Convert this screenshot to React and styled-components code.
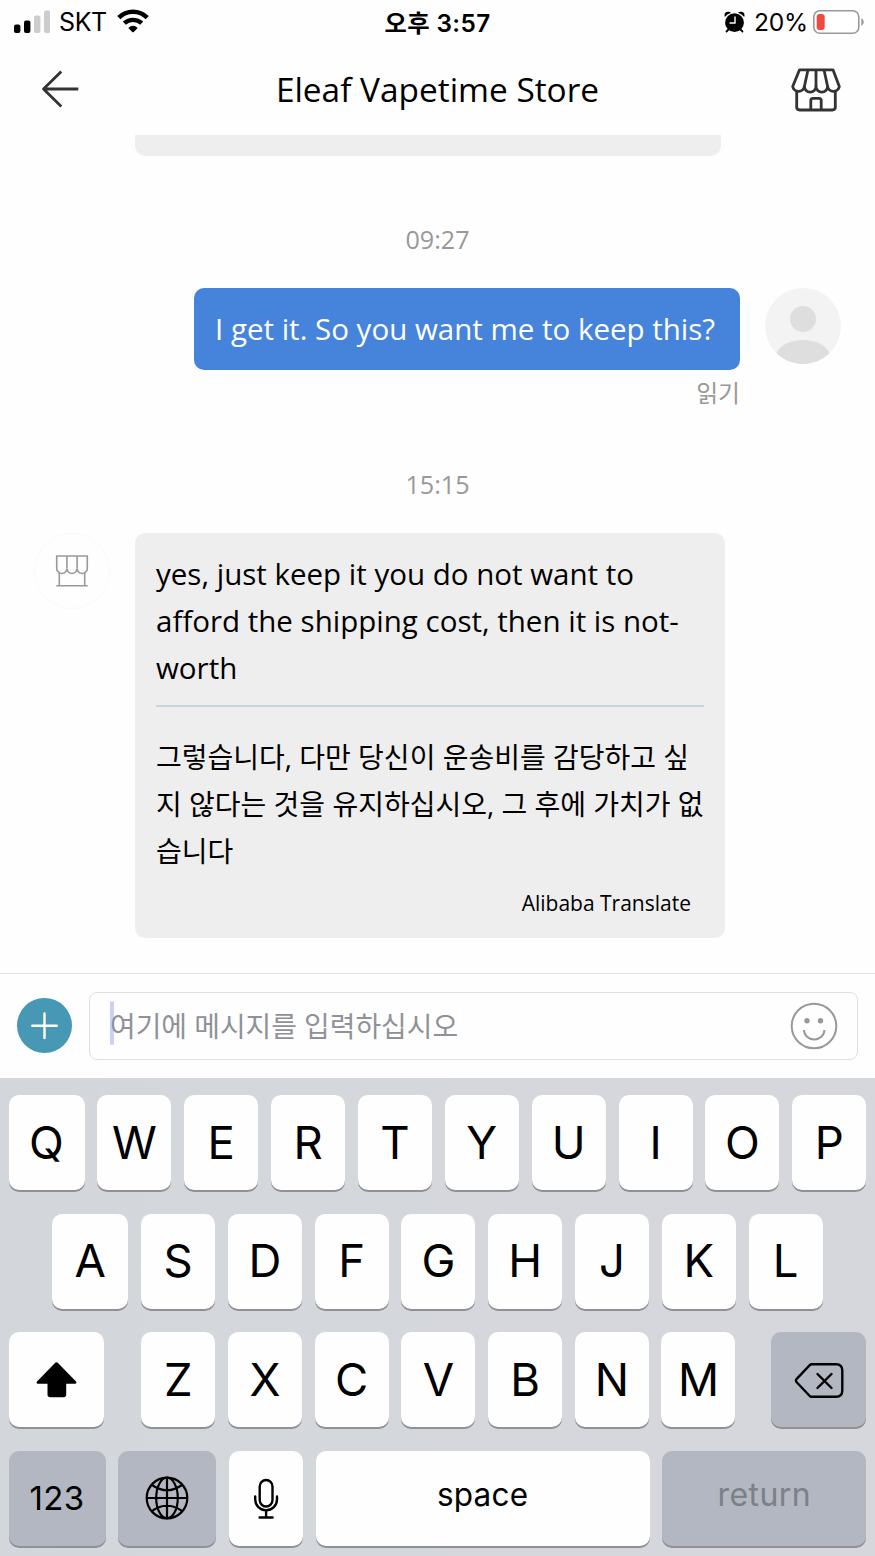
import React from "react";
import styled, { createGlobalStyle } from "styled-components";

const GlobalStyle = createGlobalStyle`
  * { box-sizing: border-box; }
  body { margin: 0; background: #fdfdfd; overflow: hidden; }
  svg { display: block; flex: none; }
`;

const ui = `"Inter", "Noto Sans CJK KR", sans-serif`;
const chat = `"Open Sans", "Noto Sans CJK KR", sans-serif`;

const Screen = styled.div`
  width: 875px;
  height: 1556px;
  display: flex;
  flex-direction: column;
  background: #fefefe;
  font-family: ${chat};
  color: #000;
  overflow: hidden;
`;

const StatusBar = styled.div`
  flex: none;
  height: 44px;
  padding: 0 11px 0 14px;
  display: grid;
  grid-template-columns: 1fr auto 1fr;
  align-items: center;
  font-family: ${ui};
  font-size: 25px;
  line-height: 44px;
`;

const StatusGroup = styled.div`
  display: flex;
  align-items: center;
  justify-content: ${(p) => (p.$end ? "flex-end" : "flex-start")};
`;

const Carrier = styled.span`
  margin: 0 10px 0 9px;
  letter-spacing: -0.4px;
`;

const Clock = styled.span`
  padding: 2px 3px 0 0;
  font-weight: 600;
  font-size: 24.3px;
  line-height: 42px;
  letter-spacing: 0.4px;
`;

const Percent = styled.span`
  margin: 0 5px 0 9px;
  font-size: 24.6px;
  letter-spacing: -0.2px;
`;

const Header = styled.header`
  flex: none;
  height: 91px;
  padding: 0 34px 0 41px;
  display: grid;
  grid-template-columns: 43px 1fr 50px;
  align-items: center;
`;

const Title = styled.h1`
  margin: -2px 0 0;
  text-align: center;
  font-weight: 400;
  font-size: 33.4px;
  line-height: 48px;
`;

const Conversation = styled.main`
  flex: none;
  height: 838px;
  display: flex;
  flex-direction: column;
`;

const PreviousBubble = styled.div`
  flex: none;
  width: 586px;
  height: 21px;
  margin-left: 135px;
  border-radius: 0 0 10px 10px;
  background: #eee;
`;

const Time = styled.div`
  flex: none;
  margin-top: ${(p) => p.$gap}px;
  height: 36px;
  line-height: 36px;
  text-align: center;
  font-size: 25.2px;
  color: #999;
`;

const MessageRow = styled.div`
  flex: none;
  display: flex;
  align-items: flex-start;
  margin-top: ${(p) => p.$gap}px;
  padding: 0 34px;
  justify-content: ${(p) => (p.$own ? "flex-end" : "flex-start")};
`;

const OwnColumn = styled.div`
  display: flex;
  flex-direction: column;
  align-items: flex-end;
  margin-right: 25px;
`;

const OwnBubble = styled.div`
  width: 546px;
  height: 82px;
  padding-left: 21px;
  border-radius: 10px;
  background: #4684dc;
  color: #fff;
  font-size: 29.5px;
  line-height: 82px;
  white-space: nowrap;
`;

const ReadMark = styled.div`
  margin-top: 5px;
  height: 36px;
  line-height: 36px;
  font-size: 23.8px;
  color: #999;
`;

const StoreAvatar = styled.div`
  width: 76px;
  height: 76px;
  margin-right: 25px;
  border: 1px solid #fafafa;
  border-radius: 50%;
  display: flex;
  align-items: center;
  justify-content: center;
`;

const StoreBubble = styled.div`
  width: 590px;
  height: 405px;
  padding: 17px 21px 0;
  border-radius: 10px;
  background: #eee;
  display: flex;
  flex-direction: column;
`;

const Line = styled.div`
  height: 47px;
  line-height: 47px;
  font-size: ${(p) => (p.$korean ? 28 : 29.5)}px;
  white-space: nowrap;
`;

const Divider = styled.div`
  flex: none;
  height: 2px;
  margin: 14px 0 27px;
  background: #c8d5dc;
`;

const Translator = styled.div`
  margin: 12px 13px 0 0;
  height: 32px;
  line-height: 32px;
  text-align: right;
  font-size: 21px;
`;

const Composer = styled.div`
  flex: none;
  height: 105px;
  padding: 0 17px 1px;
  border-top: 1px solid #e2e2e3;
  display: flex;
  align-items: center;
  gap: 17px;
`;

const AddButton = styled.button`
  width: 55px;
  height: 55px;
  padding: 0;
  border: 0;
  border-radius: 50%;
  background: #4698b4;
  display: flex;
  align-items: center;
  justify-content: center;
`;

const Field = styled.div`
  flex: 1;
  height: 68px;
  padding: 0 19px 0 21px;
  border: 1px solid #dedfe1;
  border-radius: 8px;
  display: flex;
  align-items: center;
`;

const Caret = styled.span`
  width: 4px;
  height: 44px;
  margin: -6px -4px 0 -1px;
  border-radius: 2px;
  background: #c9d0fa;
`;

const Placeholder = styled.span`
  flex: 1;
  font-size: 27.9px;
  line-height: 64px;
  color: #8e9298;
  white-space: nowrap;
`;

const Keyboard = styled.div`
  flex: 1;
  padding: 17px 8.7px 0 8.5px;
  display: flex;
  flex-direction: column;
  gap: 21.6px;
  background: linear-gradient(90deg, #d3d7dc, #d6d7dc);
`;

const KeyRow = styled.div`
  display: flex;
  justify-content: ${(p) => (p.$centered ? "center" : "space-between")};
  gap: ${(p) => (p.$centered ? 12.8 : 0)}px;
  height: 97px;
`;

const LetterGroup = styled.div`
  display: flex;
  gap: 12.7px;
  margin-left: 2px;
`;

const Key = styled.div`
  width: ${(p) => p.$width || 74}px;
  height: 95px;
  padding-bottom: ${(p) => p.$lift || 0}px;
  border-radius: 10px;
  background: ${(p) => (p.$dark ? "#b2b7c1" : "#fefefe")};
  box-shadow: 0 2px 0 #909195;
  display: flex;
  align-items: center;
  justify-content: center;
  font-family: ${ui};
  font-size: ${(p) => p.$size || 45.5}px;
  line-height: 1;
  letter-spacing: ${(p) => p.$spacing || 0}px;
  color: ${(p) => (p.$muted ? "#7c8087" : "#000")};
`;

const SignalIcon = () => (
  <svg width="36" height="24" viewBox="0 0 36 24">
    <rect x="0" y="14.5" width="6.4" height="8.5" rx="2" fill="#000" />
    <rect x="10" y="10.5" width="6.4" height="12.5" rx="2" fill="#000" />
    <rect x="20" y="5.5" width="6.4" height="17.5" rx="2" fill="#ccc" />
    <rect x="30" y="0.5" width="6.4" height="22.5" rx="2" fill="#ccc" />
  </svg>
);

const WifiIcon = () => (
  <svg width="32" height="26" viewBox="0 0 32 26">
    <g fill="none" stroke="#000" strokeWidth="4.4">
      <path d="M1.8 8.600a20 20 0 0 1 28.400 0" />
      <path d="M7.300 14.200a13 13 0 0 1 17.400 0" />
    </g>
    <path d="M11.300 18.900q4.700-4.300 9.400 0L17 22.700q-1 1-2 0z" />
  </svg>
);

const AlarmIcon = () => (
  <svg width="21" height="22" viewBox="0 0 21 22">
    <path d="M5.5 17.5 2.5 20.5M15.5 17.5l3 3" stroke="#000" strokeWidth="1.8" strokeLinecap="round" />
    <circle cx="10.5" cy="11.7" r="9.400" />
    <path d="M.8 6Q-.4 1.500 3.400 .8 5.800.4 7 1.800 3 3 .8 6zM20.200 6Q21.400 1.500 17.600.8 15.200.4 14 1.800 18 3 20.200 6z" />
    <path d="M11 6v6H6" fill="none" stroke="#fff" strokeWidth="1.4" strokeLinecap="round" />
  </svg>
);

const BatteryIcon = () => (
  <svg width="51" height="24" viewBox="0 0 51 24">
    <rect x="0.8" y="0.8" width="45" height="22.4" rx="6" fill="#fff" stroke="#999" strokeWidth="1.6" />
    <rect x="3.7" y="4" width="8" height="16" rx="3" fill="#ed4b3d" />
    <path d="M48.3 8q2.5 1.3 2.5 4t-2.5 4z" fill="#999" />
  </svg>
);

const BackIcon = () => (
  <svg width="38" height="40" viewBox="0 0 38 40" fill="none" stroke="#333" strokeWidth="2.800" strokeLinejoin="round">
    <path d="M37.300 19H2.500M20.300 1.500 2.500 19l17.800 17.500" />
  </svg>
);

const StoreIcon = () => (
  <svg width="50" height="46" viewBox="0 0 50 46" fill="none" stroke="#333" strokeWidth="2.800" strokeLinejoin="round">
    <path d="M8.500 2.800h33.500L48.300 19.500a5.900 5.600 0 0 1-11.700 0 5.800 5.600 0 0 1-11.600 0 5.800 5.600 0 0 1-11.600 0 5.900 5.600 0 0 1-11.700 0z" />
    <path d="M17 2.800 13.400 19.500M25 2.800v16.700M33 2.800l3.600 16.700" />
    <path d="M5.700 24.500V40q0 3 3 3h32.600q3 0 3-3V24.500" />
    <path d="M19.800 43V33.500q0-2.200 2.200-2.200h6q2.200 0 2.200 2.200V43" />
  </svg>
);

const SmallStoreIcon = () => (
  <svg width="34" height="34" viewBox="0 0 34 34" fill="none" stroke="#999" strokeWidth="1.600">
    <path d="M1.700 2h30.600v12.500a5.100 5 0 0 1-10.200 0 5.100 5 0 0 1-10.200 0 5.100 5 0 0 1-10.200 0z" />
    <path d="M11.900 2v12.500M22.100 2v12.500M4.300 18.500v13M29.700 18.500v13M1.300 31.800h31.400" />
  </svg>
);

const PersonIcon = () => (
  <svg width="76" height="76" viewBox="0 0 76 76">
    <circle cx="38" cy="38" r="38" fill="#f3f3f3" />
    <circle cx="38" cy="31" r="13" fill="#dedede" />
    <path d="M11.5 65.3C15 57 25.500 52 38 52s23 5 26.500 13.300A38 38 0 0 1 11.500 65.300z" fill="#dedede" />
  </svg>
);

const PlusIcon = () => (
  <svg width="28" height="28" viewBox="0 0 28 28" stroke="#fff" strokeWidth="2.4" strokeLinecap="round">
    <path d="M13.500 1.500v24.500M1.300 13.700h24.500" />
  </svg>
);

const SmileIcon = () => (
  <svg width="48" height="48" viewBox="0 0 48 48">
    <circle cx="24" cy="24" r="22.300" fill="none" stroke="#999" strokeWidth="2" />
    <circle cx="17" cy="18.800" r="2.700" fill="#999" />
    <circle cx="30.500" cy="18.800" r="2.700" fill="#999" />
    <path d="M14 28a10.200 9.400 0 0 0 20.400 0" fill="none" stroke="#999" strokeWidth="2" />
  </svg>
);

const ShiftIcon = () => (
  <svg width="42" height="36" viewBox="0 0 42 36">
    <path d="M20 .9q1.500-1.400 3 0L41 19.500q1.200 2.100-1 2.300H31.200V32.500q0 2.700-2.700 2.700H15.200q-2.700 0-2.700-2.700V21.800H3q-2.200-.2-1-2.300z" />
  </svg>
);

const DeleteIcon = () => (
  <svg width="50" height="36" viewBox="0 0 50 36" fill="none" stroke="#000" strokeWidth="2.400" strokeLinecap="round" strokeLinejoin="round">
    <path d="M18 2.200h24q6.300 0 6.300 6.300v20q0 6.300-6.300 6.300H18q-1.500 0-2.500-1L2.700 20.200q-1.500-1.700 0-3.400L15.500 3.300q1-1.100 2.500-1.100z" />
    <path d="m23.500 12 14 14M37.500 12 23.500 26" />
  </svg>
);

const GlobeIcon = () => (
  <svg width="44" height="44" viewBox="0 0 44 44" fill="none" stroke="#000" strokeWidth="2.200">
    <circle cx="22" cy="22" r="20.300" />
    <ellipse cx="22" cy="22" rx="10.800" ry="20.300" />
    <path d="M22 1.700v40.600M1.700 22h40.600M7 9q15 10.500 30 0M7 35q15-10.500 30 0" />
  </svg>
);

const MicIcon = () => (
  <svg width="26" height="42" viewBox="0 0 26 42" fill="none" stroke="#000" strokeWidth="2.400" strokeLinecap="round">
    <rect x="6.700" y="3" width="12.800" height="26.500" rx="6.400" />
    <path d="M2.200 19.500v3a10.900 10.900 0 0 0 21.800 0v-3M13.100 34v6M6.600 40.500h13" />
  </svg>
);

const letters = (text, firstWidth) =>
  [...text].map((letter, index) => (
    <Key key={letter} $width={index === 0 ? firstWidth : undefined}>
      {letter}
    </Key>
  ));

export default function App() {
  return (
    <Screen>
      <GlobalStyle />
      <StatusBar>
        <StatusGroup>
          <SignalIcon />
          <Carrier>SKT</Carrier>
          <WifiIcon />
        </StatusGroup>
        <Clock>오후 3:57</Clock>
        <StatusGroup $end>
          <AlarmIcon />
          <Percent>20%</Percent>
          <BatteryIcon />
        </StatusGroup>
      </StatusBar>
      <Header>
        <BackIcon />
        <Title>Eleaf Vapetime Store</Title>
        <StoreIcon />
      </Header>
      <Conversation>
        <PreviousBubble />
        <Time $gap={65}>09:27</Time>
        <MessageRow $own $gap={31}>
          <OwnColumn>
            <OwnBubble>I get it. So you want me to keep this?</OwnBubble>
            <ReadMark>읽기</ReadMark>
          </OwnColumn>
          <PersonIcon />
        </MessageRow>
        <Time $gap={55}>15:15</Time>
        <MessageRow $gap={31}>
          <StoreAvatar>
            <SmallStoreIcon />
          </StoreAvatar>
          <StoreBubble>
            <Line>yes, just keep it you do not want to</Line>
            <Line>afford the shipping cost, then it is not-</Line>
            <Line>worth</Line>
            <Divider />
            <Line $korean>그렇습니다, 다만 당신이 운송비를 감당하고 싶</Line>
            <Line $korean>지 않다는 것을 유지하십시오, 그 후에 가치가 없</Line>
            <Line $korean>습니다</Line>
            <Translator>Alibaba Translate</Translator>
          </StoreBubble>
        </MessageRow>
      </Conversation>
      <Composer>
        <AddButton>
          <PlusIcon />
        </AddButton>
        <Field>
          <Caret />
          <Placeholder>여기에 메시지를 입력하십시오</Placeholder>
          <SmileIcon />
        </Field>
      </Composer>
      <Keyboard>
        <KeyRow>{letters("QWERTYUIOP", 76)}</KeyRow>
        <KeyRow $centered>{letters("ASDFGHJKL", 76)}</KeyRow>
        <KeyRow>
          <Key $width={95}>
            <ShiftIcon />
          </Key>
          <LetterGroup>{letters("ZXCVBNM")}</LetterGroup>
          <Key $width={95} $dark>
            <DeleteIcon />
          </Key>
        </KeyRow>
        <KeyRow>
          <Key $width={97} $dark $size={33} $spacing={0.3}>123</Key>
          <Key $width={98} $dark>
            <GlobeIcon />
          </Key>
          <Key>
            <MicIcon />
          </Key>
          <Key $width={334} $size={31.5} $lift={7} $spacing={0.2}>space</Key>
          <Key $width={204} $dark $muted $size={32} $lift={7} $spacing={0.4}>return</Key>
        </KeyRow>
      </Keyboard>
    </Screen>
  );
}
